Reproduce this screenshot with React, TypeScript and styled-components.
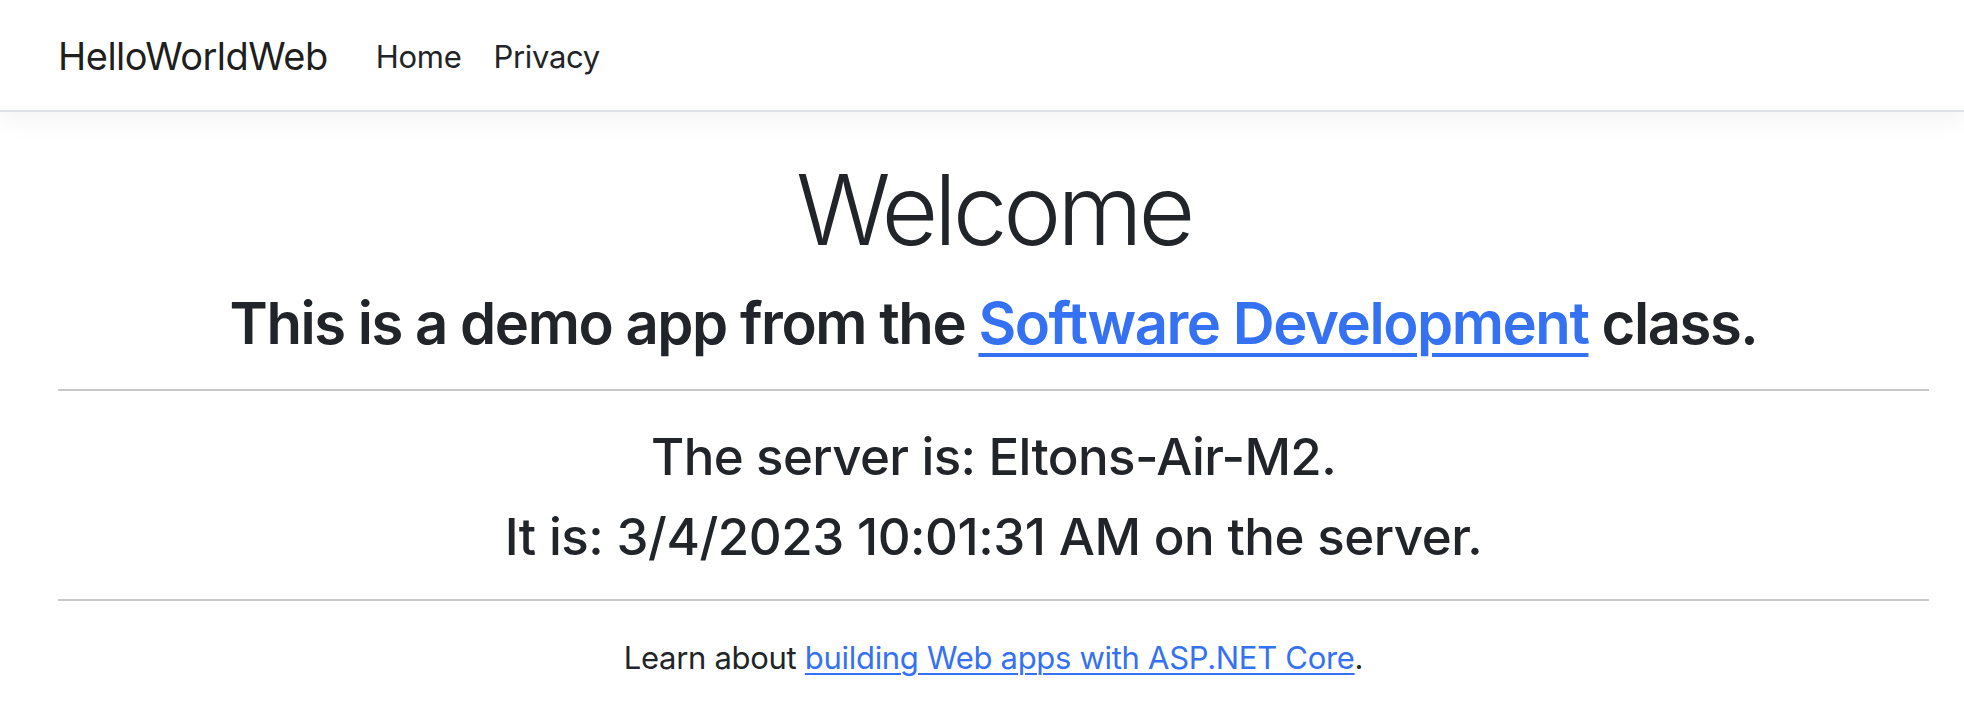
import React from "react";
import styled, { createGlobalStyle } from "styled-components";

const GlobalStyle = createGlobalStyle`
  html, body {
    margin: 0;
    padding: 0;
    background: #ffffff;
  }
  body {
    font-family: Inter, "Noto Sans", "Liberation Sans", sans-serif;
    color: #212529;
    -webkit-font-smoothing: antialiased;
  }
`;

const Page = styled.div`
  display: flex;
  flex-direction: column;
  min-height: 726px;
  background: #fff;
`;

const NavBar = styled.header`
  display: flex;
  align-items: center;
  height: 110px;
  padding: 0 58px;
  border-bottom: 2px solid #dee2e6;
  box-shadow: 0 8px 24px rgba(0, 0, 0, 0.05);
  background: #fff;
  position: relative;
  z-index: 1;
`;

const Brand = styled.a`
  font-size: 38px;
  font-weight: 400;
  color: rgba(0, 0, 0, 0.9);
  text-decoration: none;
  letter-spacing: -0.5px;
  margin-right: 32px;
  padding-top: 2px;
`;

const NavList = styled.nav`
  display: flex;
  align-items: center;
  padding-top: 2px;
`;

const NavLink = styled.a`
  font-size: 31px;
  color: #212529;
  text-decoration: none;
  padding: 0 16px;
  letter-spacing: -0.3px;
`;

const Main = styled.main`
  display: flex;
  flex-direction: column;
  align-items: center;
  padding: 0 35px 0 58px;
  margin-top: 39px;
`;

const Title = styled.h1`
  margin: 0 0 20px;
  font-size: 98px;
  font-weight: 300;
  line-height: 1.2;
  letter-spacing: -4.2px;
  color: #212529;
`;

const Subtitle = styled.h2`
  margin: 0 0 17px;
  font-size: 58px;
  font-weight: 600;
  line-height: 1.2;
  letter-spacing: -1.45px;
  color: #212529;
`;

const Link = styled.a`
  color: #3471f3;
  text-decoration: underline;
  text-decoration-thickness: 4px;
  text-underline-offset: 9px;
`;

const Rule = styled.hr`
  align-self: stretch;
  margin: 14px 0 34px;
  border: 0;
  border-top: 2px solid #c8c8c8;
`;

const Info = styled.h3<{ $tracking: number }>`
  margin: 0 0 16px;
  font-size: 51px;
  font-weight: 500;
  line-height: 1.25;
  letter-spacing: ${(p) => p.$tracking}px;
  color: #212529;
`;

const Footer = styled.p`
  margin: 0;
  font-size: 31px;
  line-height: 1.5;
  letter-spacing: -0.3px;
  color: #212529;
`;

const SmallLink = styled.a`
  color: #3471f3;
  text-decoration: underline;
  text-decoration-thickness: 2px;
  text-underline-offset: 4px;
`;

export default function App() {
  return (
    <Page>
      <GlobalStyle />
      <NavBar>
        <Brand href="#">HelloWorldWeb</Brand>
        <NavList>
          <NavLink href="#">Home</NavLink>
          <NavLink href="#">Privacy</NavLink>
        </NavList>
      </NavBar>
      <Main>
        <Title>Welcome</Title>
        <Subtitle>
          This is a demo app from the <Link href="#">Software Development</Link> class.
        </Subtitle>
        <Rule />
        <Info $tracking={-0.6}>The server is: Eltons-Air-M2.</Info>
        <Info $tracking={-0.45}>It is: 3/4/2023 10:01:31 AM on the server.</Info>
        <Rule />
        <Footer>
          Learn about <SmallLink href="#">building Web apps with ASP.NET Core</SmallLink>.
        </Footer>
      </Main>
    </Page>
  );
}
